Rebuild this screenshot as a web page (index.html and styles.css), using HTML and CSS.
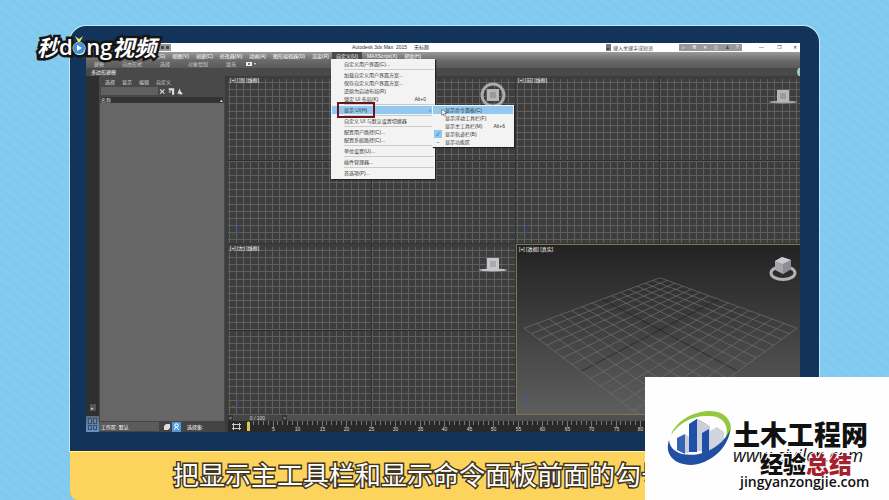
FILE: index.html
```html
<!DOCTYPE html>
<html lang="zh-CN">
<head>
<meta charset="utf-8">
<title>Autodesk 3ds Max 2015</title>
<link rel="stylesheet" href="styles.css">
</head>
<body>
<main class="monitor">
  <div class="app">
    <header class="titlebar">
      <span class="quick"><i></i><i></i></span>
      <h1>Autodesk 3ds Max&nbsp; 2015 &nbsp; &nbsp; 无标题</h1>
      <div class="search">
        <button class="search-arrow" aria-label="展开">▸</button>
        <input type="text" aria-label="搜索" placeholder="键入关键字或短语">
        <div class="tools">
          <button aria-label="查找">⌕</button><button aria-label="工具">⚒</button><button aria-label="通讯">✕</button><button aria-label="收藏">☆</button><button class="user" aria-label="登录">♟</button><button aria-label="帮助">?</button>
        </div>
      </div>
      <div class="winctl"><button aria-label="最小化">—</button><button aria-label="还原">❐</button><button aria-label="关闭">✕</button></div>
    </header>

    <nav class="menubar">
      <button>组(G)</button><button>视图(V)</button><button>创建(C)</button><button>修改器(M)</button><button>动画(A)</button><button>图形编辑器(D)</button><button>渲染(R)</button>
      <div class="menu-host">
        <button class="open">自定义(U)</button>
        <div class="menu main-menu">
          <button>自定义用户界面(C)...</button>
          <hr>
          <button>加载自定义用户界面方案...</button>
          <button>保存自定义用户界面方案...</button>
          <button>还原为启动布局(R)</button>
          <button>锁定 UI 布局(K)<kbd>Alt+0</kbd></button>
          <hr>
          <button class="hot"><span class="boxed">显示 UI(H)</span><kbd class="more">›</kbd></button>
          <hr>
          <button>自定义 UI 与默认设置切换器</button>
          <hr>
          <button>配置用户路径(C)...</button>
          <button>配置系统路径(C)...</button>
          <hr>
          <button>单位设置(U)...</button>
          <hr>
          <button>插件管理器...</button>
          <hr>
          <button>首选项(P)...</button>
          <div class="menu sub-menu">
            <button class="hot">显示命令面板(C)</button>
            <button>显示浮动工具栏(F)</button>
            <button>显示主工具栏(M)<kbd>Alt+6</kbd></button>
            <button><span class="mark check">✓</span>显示轨迹栏(B)</button>
            <button><span class="mark">–</span>显示功能区</button>
            <svg class="cursor" viewBox="0 0 8 10"><path d="M1 0v8l2-2 1 3 2-1-1-3h3z" fill="#fff" stroke="#333" stroke-width=".7"/></svg>
          </div>
        </div>
      </div>
      <button>MAXScript(X)</button><button>帮助(H)</button>
    </nav>

    <div class="ribbon">
      <button>建模</button><button>自由形式</button><button>选择</button><button>对象绘制</button><button>填充</button>
      <button class="rec" aria-label="显示方式"><svg viewBox="0 0 10 6"><path d="M0 1h6v4H0zM8 2h2L9 4z" fill="#eee"/><circle cx="3" cy="3" r="1" fill="#555"/></svg></button>
    </div>
    <div class="ribbon-label">多边形建模<span class="orb"></span></div>

    <div class="work">
      <aside class="rail">
        <button class="play" aria-label="播放">▸</button>
        <button class="layout" aria-label="视口布局"><i></i><i></i><i></i><i></i></button>
      </aside>
      <section class="explorer">
        <div class="tabs"><button>选择</button><button>显示</button><button>编辑</button><button>自定义</button></div>
        <div class="filter">
          <input type="text" aria-label="过滤">
          <svg viewBox="0 0 24 8"><path d="M1 2l4 4m0-4l-4 4" stroke="#ddd" fill="none"/><path d="M9 1h5v6h-2V3H9zM9 4h2v1H9zM17 6l2-5 1 3 2 2-2 1-1-1z" fill="#ddd"/></svg>
        </div>
        <div class="column"><span>名称</span><span>▴</span></div>
        <div class="list"></div>
        <div class="status">
          <select aria-label="工作区"><option>工作区: 默认</option></select>
          <svg viewBox="0 0 20 10"><path d="M1 4l2-2h4v4l-2 2H1z" fill="#ddd"/><rect x="9" width="9" height="10" fill="#4b98df"/><path d="M12 2h3v3h-3zM11 8l2-3 3 3" fill="none" stroke="#fff"/></svg>
          <span>选择集:</span>
        </div>
      </section>

      <section class="stage">
        <div class="views">
          <div class="view" data-axis="142"><span>[+] [顶] [线框]</span>
            <svg class="cube" viewBox="0 0 28 28"><circle cx="14" cy="14" r="11" fill="none" stroke="#aaa" stroke-width="3"/><path d="M8 8h12v12H8z" fill="#b4b6ba"/><path d="M11 11h6v6h-6z" fill="#989a9f"/></svg>
          </div>
          <div class="view" data-axis="142"><span>[+] [前] [线框]</span>
            <svg class="cube" viewBox="0 0 28 28"><ellipse cx="14" cy="21" rx="14" ry="1.5" fill="#a0a2a4"/><path d="M8 9h12v12H8z" fill="#b4b6ba"/><path d="M11 12h6v6h-6z" fill="#989a9f"/></svg>
          </div>
          <div class="view" data-axis="142"><span>[+] [左] [线框]</span>
            <svg class="cube low" viewBox="0 0 28 28"><ellipse cx="14" cy="21" rx="14" ry="1.5" fill="#c0c2c4"/><path d="M8 9h12v12H8z" fill="#c4c6ca"/><path d="M11 12h6v6h-6z" fill="#a8aaaf"/></svg>
          </div>
          <div class="view persp"><span>[+] [透视] [真实]</span>
            <svg class="floor" viewBox="0 0 283 170" preserveAspectRatio="none"></svg>
            <svg class="cube" viewBox="0 0 28 28"><ellipse cx="14" cy="19" rx="12" ry="6.500" fill="none" stroke="#b2b2b4" stroke-width="3"/><path d="M6 7l7-4 9 3v9l-8 5-8-4z" fill="#a4a5a9"/><path d="M6 7l7-4 9 3-8 4z" fill="#c8c9cc"/><path d="M14 10l8-4v9l-8 5z" fill="#8c8d92"/></svg>
          </div>
        </div>
        <div class="slider"><button aria-label="上一帧">&lt;</button><span>0 / 100</span><button aria-label="下一帧">&gt;</button></div>
        <svg class="ruler" aria-label="时间轴"></svg>
      </section>
    </div>
  </div>
  <footer class="caption"><p>把显示主工具栏和显示命令面板前面的勾号</p></footer>
</main>

<div class="brand" aria-label="秒dong视频"><b>秒</b><span>dong</span><b>视频</b>
  <svg viewBox="0 0 14 18"><path d="M3 0l4 3 4-3-3 6H6z" fill="#efe65a"/><circle cx="7" cy="12" r="6" fill="#3b94dc" stroke="#eaf5ff"/><path d="M5 9l5 3-5 3z" fill="#fff"/></svg>
</div>

<aside class="mark-card">
  <svg class="civil" viewBox="0 0 66 54">
    <path d="M24 13l7-5 9 5v27H24z" fill="#1f4fa8"/><path d="M31 8l13 7v25H31z" fill="#c9ced8"/><path d="M11 27l8-4v20l-8-4z" fill="#3564b5"/><path d="M19 23l4 3v16h-4z" fill="#c9ced8"/><path d="M36 22l7-4v24h-7z" fill="#1f4fa8"/><path d="M23 13l8-5v33h-8z" fill="#1f4fa8"/><path d="M44 20l7-4 7 5v10l-14 9z" fill="#d0d4dc"/>
    <path d="M5 24C13 1 56-10 64 12c3 8-2 17-8 22C66 19 60 5 43 5 27 4 13 12 5 24z" fill="#94c83d"/>
    <path d="M3 29c1 12 14 17 30 14 14-3 26-13 31-24-2 18-17 30-32 34C14 57-3 47 3 29z" fill="#214fa3"/>
  </svg>
  <div class="names"><strong>土木工程网</strong><span>www.civilcn.com</span></div>
  <div class="stamp"><strong>经验<em>总结</em></strong><span>jingyanzongjie.com</span></div>
</aside>
<script src="draw.js"></script>
</body>
</html>
```
FILE: styles.css
```css
* { box-sizing: border-box; }
body {
  margin: 0;
  height: 100vh;
  overflow: hidden;
  background: repeating-linear-gradient(40deg, #83cbf0 0 4px, #81c8ee 6px 8px);
  font-family: "Liberation Sans", "Noto Sans CJK SC", sans-serif;
  font-size: 5px;
  color: #ddd;
}
button, input, select { font: inherit; color: inherit; border: 0; margin: 0; padding: 0; background: none; border-radius: 0; white-space: nowrap; }
h1, p { margin: 0; font-weight: 400; }
i, em { font-style: normal; }
.monitor {
  height: 100vh;
  margin: 0 70px;
  padding-top: 26px;
  display: flex;
  flex-direction: column;
}
.app {
  flex: 1;
  min-height: 0;
  display: flex;
  flex-direction: column;
  border: 16px solid #12345b;
  border-width: 17px 19px 19px 16px;
  border-radius: 16px 16px 0 0;
  background: #444;
  box-shadow: 0 0 0 1px #c4e8fb;
}
.titlebar { flex: 0 0 9px; display: flex; align-items: center; background: #fff; color: #333; }
.titlebar h1 { font-size: 5px; line-height: 9px; flex: 1; padding-left: 181px; white-space: nowrap; }
.quick { display: flex; gap: 2px; width: 85px; height: 7px; background: #999; align-items: center; justify-content: flex-end; padding-right: 2px; }
.quick i { width: 3px; height: 3px; background: #444; }
.search { display: flex; align-items: center; height: 7px; width: 136px; background: #fff; }
.search-arrow { width: 5px; height: 7px; background: #777; }
.search input { width: 68px; flex: 1; height: 7px; padding-left: 2px; }
.search input::placeholder { color: #444; }
.tools { display: flex; justify-content: space-around; width: 63px; height: 7px; background: #999; line-height: 7px; color: #fff; }
.tools .user { color: #24559b; }
.winctl { display: flex; justify-content: space-between; width: 38px; margin: 0 3px 0 17px; line-height: 7px; }

.menubar { flex: 0 0 8px; display: flex; gap: 7px; background: linear-gradient(#9a9a9a, #6d6d6d); line-height: 7px; padding-left: 67px; color: #fff; }
.menu-host { position: relative; display: flex; margin: 0 -2px 0 -4px; }
.menu-host .open { background: #4a4a4a; padding: 0 4px; }
.menu {
  position: absolute;
  z-index: 3;
  display: flex;
  flex-direction: column;
  background: #f3f3f3;
  color: #333;
  box-shadow: 1px 1px 1px #222;
}
.menu button { position: relative; display: flex; align-items: center; justify-content: space-between; height: 8px; padding: 0 8px 0 12px; line-height: 8px; text-align: left; }
.menu hr { width: 90px; margin: 1px 0 1px 12px; border: 0; border-top: 1px solid #ccc; }
.menu kbd { font: inherit; }
.menu .hot { background: #91c9f0; }
.main-menu { width: 104px; top: 7px; left: -1px; padding: 1px 1px 2px; }
.main-menu > .hot .more { margin-right: -5px; }
.boxed { margin-left: -7px; padding: 2px 6px 2px 5px; border: 2px solid #6b1520; z-index: 1; line-height: 8px; }
.sub-menu { top: 46px; left: 101px; width: 82px; padding: 1px; }
.sub-menu .hot { width: 80px; }
.mark { position: absolute; left: 1px; width: 8px; text-align: center; }
.check { background: #8dc8f2; }
.cursor { position: absolute; width: 6px; height: 8px; left: 9px; top: 4px; }

.ribbon { flex: 0 0 8px; display: flex; padding-left: 8px; background: linear-gradient(#6b6b6b, #5a5a5a); line-height: 8px; color: #ccc; }
.ribbon button { margin-right: 18px; }
.ribbon .rec { margin-left: -8px; display: flex; align-items: center; }
.rec svg { width: 10px; height: 6px; }
.ribbon-label { flex: 0 0 8px; position: relative; overflow: hidden; line-height: 8px; padding-left: 5px; background: #494949; color: #fff; }
.orb { position: absolute; right: -9px; top: -2px; width: 12px; height: 12px; border-radius: 50%; background: #9bcbbb; }

.work { flex: 1; min-height: 0; display: flex; }
.rail { flex: 0 0 13px; display: flex; flex-direction: column; align-items: center; justify-content: flex-end; background: #2f2f2f; }
.play { width: 6px; height: 7px; margin-bottom: 5px; line-height: 6px; background: #555; }
.layout { width: 13px; height: 16px; padding: 2px; display: grid; grid-template-columns: 1fr 1fr; gap: 1px; background: linear-gradient(#586a80, #5f94cc); }
.layout i { background: #72879d; border: 1px solid #38506b; }
.explorer { flex: 0 0 129px; display: flex; flex-direction: column; background: #484848; border-right: 3px solid #3c3c3c; }
.tabs { display: flex; gap: 7px; padding: 2px 6px 0; line-height: 8px; }
.filter { display: flex; gap: 1px; height: 11px; padding: 1px 2px 0; }
.filter input { width: 57px; height: 8px; background: #606060; }
.filter svg { width: 26px; height: 9px; }
.column { display: flex; justify-content: space-between; height: 6px; margin: 0 2px; line-height: 6px; background: #333; }
.list { flex: 1; margin: 0 1px; background: #666; }
.status { display: flex; align-items: center; height: 11px; background: #444; gap: 4px; color: #fff; }
.status select { appearance: none; width: 60px; height: 9px; padding-left: 2px; background: #5b5b5b; }
.status svg { width: 20px; height: 10px; }

.stage { flex: 1; min-width: 0; display: flex; flex-direction: column; }
.views { flex: 1; min-height: 0; display: grid; grid-template: 167fr 170fr / 287fr 284fr; gap: 1px; background: #353535; }
.view { position: relative; overflow: hidden; background: #3d3d3d; line-height: 8px; }
.view > span { position: relative; z-index: 1; padding-left: 2px; color: #fff; }
.grid { position: absolute; inset: 0; width: 100%; height: 100%; }
.cube { position: absolute; top: 5px; right: 8px; width: 28px; height: 28px; }
.view:nth-child(even) .cube { right: 3px; }
.persp { border: 1px solid #83744a; border-right: 0; background: linear-gradient(#222, #5e5e5e); }
.floor { position: absolute; inset: 0; width: 100%; height: 100%; }
.persp .cube { top: 9px; }
.slider { display: flex; align-items: center; height: 6px; line-height: 6px; background: #4f4f4f; }
.slider span { width: 49px; text-align: center; background: #454545; }
.slider button { width: 5px; background: #333; }
.ruler { width: 100%; height: 11px; background: #292929; font-size: 5px; }

.caption { flex: 0 0 49px; display: flex; background: #fcd35c; border-top: 1px solid #fff4b0; box-shadow: 0 -1px #26313b; border-radius: 0 0 0 8px; }
.caption p {
  padding-left: 103px;
  font: 400 26px/43px "Noto Sans CJK SC", sans-serif;
  color: #fff;
  -webkit-text-stroke: 3px #40351f;
  paint-order: stroke fill;
  white-space: nowrap;
}

.brand {
  position: absolute;
  left: 37px;
  top: 29px;
  display: flex;
  align-items: center;
  line-height: 34px;
  font-size: 22px;
  color: #fff;
  font-style: italic;
  -webkit-text-stroke: 5px #151515;
  paint-order: stroke fill;
}
.brand b { font-family: "Noto Sans CJK SC", sans-serif; }
.brand span { font: 600 22px/34px "Open Sans", sans-serif; }
.brand svg { position: absolute; left: 35px; top: 6px; width: 14px; height: 20px; }

.mark-card {
  position: absolute;
  right: 0;
  bottom: 0;
  width: 244px;
  height: 123px;
  padding: 34px 0 0 21px;
  display: flex;
  gap: 1px;
  background: #fefefe;
  color: #111;
}
.civil { flex: 0 0 66px; height: 54px; }
.names { display: flex; flex-direction: column; padding-top: 9px; }
.names strong { font: 900 27px/27px "Noto Sans CJK SC", sans-serif; }
.names span { font: italic 500 18px/16px "Open Sans", sans-serif; }
.stamp { position: absolute; left: 95px; top: 74px; display: flex; flex-direction: column; }
.stamp strong { padding-left: 20px; font: 900 23px/24px "Noto Sans CJK SC", sans-serif; -webkit-text-stroke: 2px #fff; paint-order: stroke fill; }
.stamp em { color: #a5202d; }
.stamp span { font: 600 14px/13px "Open Sans", sans-serif; }
```
FILE: draw.js
```js
const NS = "http://www.w3.org/2000/svg";

function add(parent, name, attrs, text) {
  const node = document.createElementNS(NS, name);
  for (const key in attrs) node.setAttribute(key, attrs[key]);
  if (text) node.textContent = text;
  parent.appendChild(node);
  return node;
}

// Wireframe grid of the three orthographic viewports.
document.querySelectorAll(".view[data-axis]").forEach(view => {
  const svg = document.createElementNS(NS, "svg");
  svg.setAttribute("class", "grid");
  view.prepend(svg);
  const w = view.clientWidth, h = view.clientHeight, step = 7.15;
  const axis = Number(view.dataset.axis);
  for (let x = 1; x < w; x += step)
    add(svg, "path", { d: `M${Math.round(x) + 0.5} 3V${h}`, stroke: "#5f5f5f" });
  for (let y = 6; y < h; y += step)
    add(svg, "path", { d: `M0 ${Math.round(y) + 0.5}H${w}`, stroke: "#5f5f5f" });
  add(svg, "path", { d: `M${axis + 1.5} 0V${h}M0 ${Math.round(h / 2)}.5H${w}`, stroke: "#2f2f2f" });
  add(svg, "path", { d: `M10.5 ${h - 8}v-11`, stroke: "#34407c" });
  add(svg, "path", { d: `M3 ${h - 8.5}h4`, stroke: "#2f6a34" });
});

// Ground plane: corners are far, right, near, left.
const floor = document.querySelector(".floor");
const far = [143, 33], right = [280, 84], near = [141, 186], left = [7, 84];
const depth = t => t / (t + (1 - t) * 1.35);
const mix = (a, b, t) => [a[0] + (b[0] - a[0]) * t, a[1] + (b[1] - a[1]) * t];
for (let i = 0; i <= 14; i++) {
  const t = depth(i / 14), stroke = i === 7 ? "#1f1f1f" : "#707070";
  add(floor, "path", { d: `M${mix(far, right, t)}L${mix(left, near, t)}`, stroke, "stroke-width": 0.7 });
  add(floor, "path", { d: `M${mix(far, left, t)}L${mix(right, near, t)}`, stroke, "stroke-width": 0.7 });
}
add(floor, "path", { d: "M9 160v-10", stroke: "#3b55a0" });

// Track bar ticks, one number every five frames.
const ruler = document.querySelector(".ruler");
add(ruler, "path", { d: "M5.500 2v7M11.500 2v7M4 3.500h9M4 7.500h9", stroke: "#ccc", fill: "none" });
for (let f = 0; f <= 100; f++) {
  const x = Math.round(20 + f * 4.9) + 0.5;
  add(ruler, "path", { d: `M${x} 0V${f % 5 ? 4 : 6}`, stroke: "#777" });
  if (f && f % 5 === 0) add(ruler, "text", { x, y: 10, fill: "#ddd", "text-anchor": "middle" }, String(f));
}
add(ruler, "path", { d: "M20.500 1v9", stroke: "#dfc94a", "stroke-width": 3 });
```
